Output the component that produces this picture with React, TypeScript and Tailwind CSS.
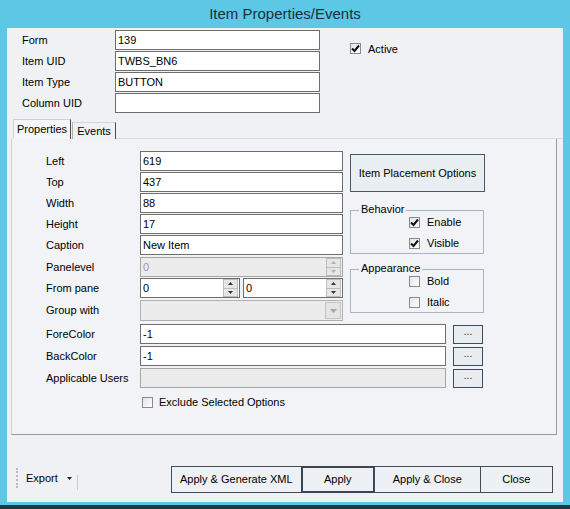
import React from "react";

const F = { fontFamily: '"Liberation Sans", Arial, sans-serif' };

function Check({ checked }: { checked?: boolean }) {
  return (
    <div className="w-[11px] h-[11px] border border-[#8a8a8a] bg-gradient-to-br from-[#e4e4e4] to-white flex items-center justify-center shrink-0">
      {checked && (
        <svg width="9" height="9" viewBox="0 0 9 9">
          <path d="M1 4.5 L3.5 7 L8 1.5" stroke="#111" strokeWidth="2" fill="none" />
        </svg>
      )}
    </div>
  );
}

function Input({ value, w, disabled }: { value?: string; w: string; disabled?: boolean }) {
  return (
    <div
      className={`${w} h-[20px] border flex items-center px-[2px] text-[11px] ${
        disabled ? "border-[#a6a6a6] bg-[#ececec] text-[#9a9a9a]" : "border-[#6e6e6e] bg-white text-black"
      }`}
    >
      {value}
    </div>
  );
}

function SpinBtns({ disabled }: { disabled?: boolean }) {
  const c = disabled ? "#b0b0b0" : "#333";
  return (
    <div className="flex flex-col h-[18px] w-[15px] ml-auto">
      <div className="flex-1 bg-[#e6e6e6] border border-[#bdbdbd] flex items-center justify-center">
        <svg width="5" height="3" viewBox="0 0 5 3"><path d="M0 3 L2.5 0 L5 3Z" fill={c} /></svg>
      </div>
      <div className="flex-1 bg-[#e6e6e6] border border-[#bdbdbd] border-t-0 flex items-center justify-center">
        <svg width="5" height="3" viewBox="0 0 5 3"><path d="M0 0 L2.5 3 L5 0Z" fill={c} /></svg>
      </div>
    </div>
  );
}

function Spinner({ value, w, disabled }: { value: string; w: string; disabled?: boolean }) {
  return (
    <div
      className={`${w} h-[20px] border flex items-center pl-[2px] pr-[1px] text-[11px] ${
        disabled ? "border-[#a6a6a6] bg-[#ececec] text-[#9a9a9a]" : "border-[#6e6e6e] bg-white text-black"
      }`}
    >
      <span>{value}</span>
      <SpinBtns disabled={disabled} />
    </div>
  );
}

function Row({ label, children, mt = "mt-[1px]" }: { label: string; children: React.ReactNode; mt?: string }) {
  return (
    <div className={`flex items-center ${mt}`}>
      <div className="w-[94px] text-[11px] text-black">{label}</div>
      {children}
    </div>
  );
}

function DotBtn() {
  return (
    <div className="ml-[7px] w-[30px] h-[19px] border border-[#3e4c5c] bg-[#e8edf2] flex items-center justify-center text-[10px] leading-none text-[#222] pb-[4px]">
      ...
    </div>
  );
}

export default function App() {
  return (
    <div style={F} className="w-[570px] h-[509px] bg-[#5cc8e6] flex flex-col overflow-hidden">
      <div className="h-[28px] flex items-center justify-center text-[15px] text-[#1a2f3c]">
        Item Properties/Events
      </div>
      <div className="mx-[7px] h-[474px] bg-[#eff1f4] flex flex-col">
        {/* top fields */}
        <div className="flex pt-[2px]">
          <div className="pl-[15px] flex flex-col gap-[1px]">
            {[
              ["Form", "139"],
              ["Item UID", "TWBS_BN6"],
              ["Item Type", "BUTTON"],
              ["Column UID", ""],
            ].map(([l, v]) => (
              <div key={l} className="flex items-center">
                <div className="w-[93px] text-[11px] text-black">{l}</div>
                <Input value={v} w="w-[205px]" />
              </div>
            ))}
          </div>
          <div className="ml-[30px] mt-[13px] flex items-start gap-[7px] text-[11px]">
            <Check checked />
            <span className="leading-[11px] mt-[1px]">Active</span>
          </div>
        </div>

        {/* tabs */}
        <div className="ml-[6px] mt-[6px] flex items-end h-[20px]">
          <div className="h-[20px] w-[58px] flex items-center justify-center text-[11px] bg-[#f4f6f8] border-r border-[#4a4a4a] border-t border-l border-t-[#d0d0d0] border-l-[#d0d0d0]">
            Properties
          </div>
          <div className="h-[17px] w-[44px] flex items-center justify-center text-[11px] border-r border-[#4a4a4a] border-t border-t-[#d6d6d6] ml-[1px] border-l border-l-[#b0b0b0]">
            Events
          </div>
          <div className="flex-1 border-b border-[#d6dbe0]" />
        </div>

        {/* tab panel */}
        <div className="ml-[4px] w-[546px] h-[296px] border-l border-l-[#d0d5da] border-r border-r-[#9a9a9a] border-b border-b-[#9a9a9a] bg-[#f1f3f6] flex flex-col">
          <div className="flex pl-[34px] pt-[12px]">
            <div className="flex flex-col">
              <Row label="Left" mt="mt-0"><Input value="619" w="w-[203px]" /></Row>
              <Row label="Top"><Input value="437" w="w-[203px]" /></Row>
              <Row label="Width"><Input value="88" w="w-[203px]" /></Row>
              <Row label="Height"><Input value="17" w="w-[203px]" /></Row>
              <Row label="Caption"><Input value="New Item" w="w-[203px]" /></Row>
              <Row label="Panelevel" mt="mt-[2px]"><Spinner value="0" w="w-[203px]" disabled /></Row>
              <Row label="From pane">
                <Spinner value="0" w="w-[100px]" />
                <div className="w-[3px]" />
                <Spinner value="0" w="w-[100px]" />
              </Row>
              <Row label="Group with" mt="mt-[2px]">
                <div className="w-[203px] h-[21px] border border-[#b0b0b0] bg-[#ececec] flex items-center justify-end pr-[1px]">
                  <div className="w-[16px] h-[17px] bg-[#e4e4e4] border border-[#c4c4c4] flex items-center justify-center">
                    <svg width="7" height="4" viewBox="0 0 7 4"><path d="M0 0 L3.5 4 L7 0Z" fill="#a8a8a8" /></svg>
                  </div>
                </div>
              </Row>
            </div>
            <div className="ml-[7px] mt-[3px] flex flex-col w-[135px]">
              <div className="h-[38px] border border-[#4a5868] bg-[#e9eef3] flex items-center justify-center text-[11px]">
                Item Placement Options
              </div>
              <div className="relative mt-[18px] h-[44px] w-[134px] border border-[#aab4be]">
                <span className="absolute -top-[8px] left-[8px] px-[2px] bg-[#f1f3f6] text-[11px] leading-[13px]">Behavior</span>
                <div className="pl-[58px] pt-[6px] flex flex-col gap-[10px] text-[11px]">
                  <div className="flex items-center gap-[7px]"><Check checked /><span className="leading-[11px]">Enable</span></div>
                  <div className="flex items-center gap-[7px]"><Check checked /><span className="leading-[11px]">Visible</span></div>
                </div>
              </div>
              <div className="relative mt-[15px] h-[44px] w-[134px] border border-[#aab4be]">
                <span className="absolute -top-[8px] left-[8px] px-[2px] bg-[#f1f3f6] text-[11px] leading-[13px]">Appearance</span>
                <div className="pl-[58px] pt-[6px] flex flex-col gap-[10px] text-[11px]">
                  <div className="flex items-center gap-[7px]"><Check /><span className="leading-[11px]">Bold</span></div>
                  <div className="flex items-center gap-[7px]"><Check /><span className="leading-[11px]">Italic</span></div>
                </div>
              </div>
            </div>
          </div>
          <div className="pl-[34px] flex flex-col">
            <Row label="ForeColor" mt="mt-[3px]"><Input value="-1" w="w-[306px]" /><DotBtn /></Row>
            <Row label="BackColor" mt="mt-[2px]"><Input value="-1" w="w-[306px]" /><DotBtn /></Row>
            <Row label="Applicable Users" mt="mt-[2px]"><Input w="w-[306px]" disabled /><DotBtn /></Row>
            <div className="flex items-center mt-[8px] ml-[96px] gap-[6px] text-[11px] leading-[13px]">
              <Check />
              <span>Exclude Selected Options</span>
            </div>
          </div>
        </div>

        {/* bottom bar */}
        <div className="flex items-start mt-[31px]">
          <div className="ml-[9px] h-[24px] flex items-center">
            <div className="w-[2px] h-[20px] border-l-2 border-dotted border-[#b8bcc2]" />
            <span className="ml-[8px] text-[11px]">Export</span>
            <svg className="ml-[9px]" width="5" height="3" viewBox="0 0 5 3"><path d="M0 0 L2.5 3 L5 0Z" fill="#222" /></svg>
            <div className="ml-[5px] self-end w-[1px] h-[15px] bg-[#c8ccd0]" />
          </div>
          <div className="ml-[93px] flex text-[11px]">
            <div className="w-[131px] h-[27px] border border-[#3e4c5c] bg-[#edf1f5] flex items-center justify-center">Apply &amp; Generate XML</div>
            <div className="w-[74px] h-[27px] border-2 border-[#3a4654] bg-[#edf1f5] flex items-center justify-center -ml-[1px]">Apply</div>
            <div className="w-[107px] h-[27px] border border-[#3e4c5c] bg-[#edf1f5] flex items-center justify-center -ml-[1px]">Apply &amp; Close</div>
            <div className="w-[73px] h-[27px] border border-[#3e4c5c] bg-[#edf1f5] flex items-center justify-center -ml-[1px]">Close</div>
          </div>
        </div>
      </div>
      <div className="mt-[3px] flex-1 bg-[#1d3a44]" />
    </div>
  );
}
